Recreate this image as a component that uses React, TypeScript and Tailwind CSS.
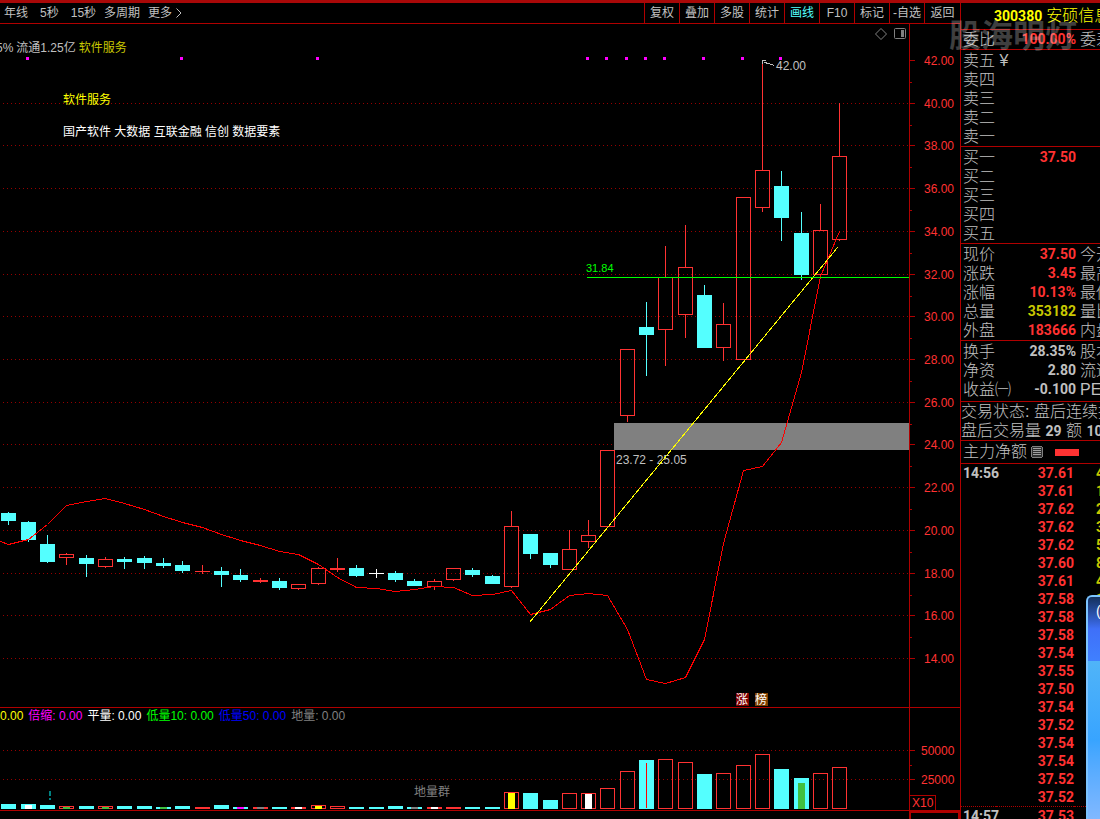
import React from 'react';

type Kind = 'up' | 'down' | 'flat';

interface Bar {
  x: number;
  kind: Kind;
  top: number;
  bottom: number;
  high: number;
  low: number;
  vol: number;
  mark?: string;
}

const UP = '#ff3232';
const DOWN = '#54ffff';
const AXIS = '#b00000';

// x, kind, body top, body bottom, high, low, volume top, volume marker
const RAW: [number, Kind, number, number, number, number, number, string?][] = [
  [8, 'down', 513, 521, 512, 525, 804],
  [28, 'down', 522, 540, 521, 542, 804, '#ffffff'],
  [47, 'down', 544, 562, 535, 563, 805],
  [66, 'up', 554, 558, 553, 565, 806, '#40c040'],
  [86, 'down', 558, 564, 555, 577, 806],
  [105, 'up', 559, 567, 557, 568, 806, '#40c040'],
  [124, 'down', 559, 562, 557, 569, 806],
  [144, 'down', 558, 563, 556, 569, 806],
  [163, 'down', 563, 566, 558, 568, 807, '#40c040'],
  [182, 'down', 565, 571, 561, 573, 806],
  [202, 'up', 571, 572, 565, 574, 807],
  [221, 'down', 571, 575, 567, 587, 805],
  [240, 'down', 575, 580, 569, 582, 807, '#ff00ff'],
  [260, 'up', 580, 582, 578, 583, 807, '#808080'],
  [279, 'down', 581, 588, 578, 590, 807],
  [298, 'up', 584, 589, 584, 590, 807, '#ffffff'],
  [318, 'up', 568, 584, 567, 585, 805, '#ffff00'],
  [337, 'up', 568, 570, 558, 572, 806],
  [356, 'down', 568, 576, 565, 577, 807],
  [376, 'flat', 573, 574, 569, 578, 807],
  [395, 'down', 573, 580, 571, 582, 806],
  [414, 'down', 581, 586, 579, 586, 807, '#808080'],
  [434, 'up', 581, 587, 579, 590, 807, '#ffffff'],
  [453, 'up', 568, 580, 568, 581, 807],
  [472, 'down', 570, 575, 568, 577, 807],
  [492, 'down', 576, 584, 575, 584, 807],
  [511, 'up', 526, 587, 511, 588, 792, '#ffff00'],
  [530, 'down', 534, 554, 534, 559, 793],
  [550, 'down', 553, 565, 553, 568, 800],
  [569, 'up', 549, 570, 530, 570, 793],
  [588, 'up', 535, 542, 520, 548, 793, '#ffffff'],
  [607, 'up', 450, 527, 450, 527, 788],
  [627, 'up', 349, 416, 349, 422, 771],
  [646, 'down', 327, 335, 302, 376, 760],
  [665, 'up', 277, 330, 246, 366, 759],
  [685, 'up', 267, 315, 225, 338, 762],
  [704, 'down', 295, 348, 285, 348, 774],
  [723, 'up', 324, 348, 303, 361, 773],
  [743, 'up', 197, 360, 197, 360, 765],
  [762, 'up', 170, 208, 61, 212, 754],
  [781, 'down', 186, 218, 171, 241, 769],
  [801, 'down', 233, 275, 212, 280, 778, '#40c040'],
  [820, 'up', 230, 275, 204, 275, 773],
  [839, 'up', 156, 240, 103, 241, 767],
];

const BARS: Bar[] = RAW.map(([x, kind, top, bottom, high, low, vol, mark]) => ({
  x, kind, top, bottom, high, low, vol, mark,
}));

const MA = [
  541, 544, 539, 524, 505, 501, 498, 503, 509, 516, 522, 527, 534, 540, 545, 551, 554, 564, 577, 587, 588, 591,
  589, 586, 587, 595, 594, 590, 614, 609, 595, 593, 595, 629, 679, 683, 677, 639, 543, 470, 466, 442, 372, 276, 231,
];
const MA_POINTS = [0, ...BARS.map((b) => b.x)].map((x, i) => `${x},${MA[i]}`).join(' ');

const EVENT_BARS = [1, 9, 16, 30, 31, 32, 33, 34, 36, 38, 40];

const PRICE_TICKS = [60, 103, 145, 188, 231, 274, 316, 359, 402, 444, 487, 530, 573, 615, 658];
const VOLUME_TICKS = [750, 779];

const PERIODS = [
  { label: '年线', gap: 'mr-3' },
  { label: '5秒', gap: 'mr-3' },
  { label: '15秒', gap: 'mr-2' },
  { label: '多周期', gap: 'mr-2' },
];
const TOOLS = ['复权', '叠加', '多股', '统计', '画线', 'F10', '标记', '-自选', '返回'];

const INDICATORS = [
  { text: '0.00', color: 'text-[#ffff00]' },
  { text: '倍缩: 0.00', color: 'text-[#ff00ff]' },
  { text: '平量: 0.00', color: 'text-white' },
  { text: '低量10: 0.00', color: 'text-[#00ff00]' },
  { text: '低量50: 0.00', color: 'text-[#0000ff]' },
  { text: '地量: 0.00', color: 'text-[#808080]' },
];

interface QuoteRow {
  label: string;
  value?: string;
  color?: string;
  next?: string;
}

const RED = 'text-[#ff3232]';
const YELLOW = 'text-[#c8c800]';
const GRAY = 'text-[#c0c0c0]';

const RATIO: QuoteRow[] = [{ label: '委比', value: '100.00%', color: RED, next: '委差' }];
const ASKS: QuoteRow[] = [{ label: '卖五 ¥' }, { label: '卖四' }, { label: '卖三' }, { label: '卖二' }, { label: '卖一' }];
const BIDS: QuoteRow[] = [
  { label: '买一', value: '37.50', color: RED },
  { label: '买二' },
  { label: '买三' },
  { label: '买四' },
  { label: '买五' },
];
const PRICES: QuoteRow[] = [
  { label: '现价', value: '37.50', color: RED, next: '今开' },
  { label: '涨跌', value: '3.45', color: RED, next: '最高' },
  { label: '涨幅', value: '10.13%', color: RED, next: '最低' },
  { label: '总量', value: '353182', color: YELLOW, next: '量比' },
  { label: '外盘', value: '183666', color: RED, next: '内盘' },
];
const FUNDAMENTALS: QuoteRow[] = [
  { label: '换手', value: '28.35%', color: GRAY, next: '股本' },
  { label: '净资', value: '2.80', color: GRAY, next: '流通' },
  { label: '收益㈠', value: '-0.100', color: GRAY, next: 'PE(动)' },
];

const TRADES: [string, string, string][] = [
  ['14:56', '37.61', '4'],
  ['', '37.61', '1'],
  ['', '37.62', '2'],
  ['', '37.62', '3'],
  ['', '37.62', '5'],
  ['', '37.60', '8'],
  ['', '37.61', '4'],
  ['', '37.58', '1'],
  ['', '37.58', ''],
  ['', '37.58', ''],
  ['', '37.54', ''],
  ['', '37.55', ''],
  ['', '37.50', ''],
  ['', '37.54', ''],
  ['', '37.52', ''],
  ['', '37.54', ''],
  ['', '37.54', ''],
  ['', '37.52', ''],
  ['', '37.52', ''],
  ['14:57', '37.53', ''],
];

const NUM = "font-['Roboto','Liberation_Sans',sans-serif] text-sm font-bold";

const GridLines: React.FC<{ ys: number[] }> = ({ ys }) => (
  <>
    {ys.map((y) => (
      <line key={y} x1="3" x2="100%" y1={y + 0.5} y2={y + 0.5} stroke="#960000" strokeDasharray="1 3" />
    ))}
  </>
);

const Box: React.FC<{ x: number; top: number; bottom: number; kind: Kind }> = ({ x, top, bottom, kind }) => {
  const h = bottom - top;
  if (kind === 'flat') return <rect x={x - 7} y={top} width="15" height={h} fill="#ffffff" />;
  if (kind === 'down') return <rect x={x - 7} y={top} width="15" height={h} fill={DOWN} />;
  if (h < 3) return <rect x={x - 7} y={top} width="15" height={h} fill={UP} />;
  return <rect x={x - 6.5} y={top + 0.5} width="14" height={h - 1} fill="none" stroke={UP} />;
};

const Candle: React.FC<{ bar: Bar }> = ({ bar }) => {
  const color = bar.kind === 'up' ? UP : bar.kind === 'down' ? DOWN : '#ffffff';
  return (
    <g>
      <rect x={bar.x} y={bar.high} width="1" height={bar.top - bar.high} fill={color} />
      <rect x={bar.x} y={bar.bottom} width="1" height={bar.low - bar.bottom} fill={color} />
      <Box x={bar.x} top={bar.top} bottom={bar.bottom} kind={bar.kind} />
    </g>
  );
};

const PriceChart: React.FC = () => (
  <svg className="col-start-1 row-start-1 block h-[683px] w-full text-xs" shapeRendering="crispEdges">
    <g transform="translate(0 -24)">
      <GridLines ys={PRICE_TICKS.slice(1)} />
      {BARS.map((bar) => (
        <Candle key={bar.x} bar={bar} />
      ))}
      {EVENT_BARS.map((i) => (
        <rect key={i} x={BARS[i].x - 2} y="57" width="3" height="3" fill="#ff00ff" />
      ))}

      {/* gap zone */}
      <rect x="614" y="423" width="100%" height="27" fill="#808080" />
      <text x="616" y="464" fill="#c0c0c0">23.72 - 25.05</text>

      <polyline points={MA_POINTS} fill="none" stroke="#ff0000" transform="translate(0.5 0.5)" />
      <line x1="529.5" y1="622.5" x2="837.5" y2="247.5" stroke="#ffff00" />
      <line x1="587" x2="100%" y1="277.5" y2="277.5" stroke="#00ff00" />
      <text x="586" y="272" fill="#00ff00" className="text-[11px]">31.84</text>

      {/* high marker */}
      <path d="M763 60.5h3M762.5 60v4M764 62.5l5 1 5 2" fill="none" stroke="#c0c0c0" />
      <text x="776" y="70" fill="#c0c0c0">42.00</text>

      <rect x="736" y="693" width="13" height="13" fill="#800000" />
      <text x="736" y="704" fill="#ffffff">涨</text>
      <rect x="755" y="693" width="13" height="13" fill="#804000" />
      <text x="755" y="704" fill="#ffffff">榜</text>
    </g>
  </svg>
);

const VolumeChart: React.FC = () => (
  <svg className="col-start-1 row-start-1 block h-[102px] w-full text-xs" shapeRendering="crispEdges">
    <g transform="translate(0 -708)">
      <GridLines ys={VOLUME_TICKS} />
      {BARS.map((bar) => (
        <g key={bar.x}>
          <Box x={bar.x} top={bar.vol} bottom={809} kind={bar.kind === 'flat' ? 'down' : bar.kind} />
          {bar.mark && (
            <rect
              x={bar.x - 3}
              y={bar.x === 801 ? 783 : Math.min(bar.vol + 1, 807)}
              width="7"
              height={bar.x === 801 ? 26 : 809 - Math.min(bar.vol + 1, 807)}
              fill={bar.mark}
            />
          )}
        </g>
      ))}
      <rect x="646" y="763" width="1" height="45" fill="#ff0000" />
      <rect x="49" y="791" width="2" height="5" fill="#008080" />
      <rect x="49" y="798" width="2" height="2" fill="#008080" />
      <text x="414" y="796" fill="#808080">地量群</text>
    </g>
  </svg>
);

const PriceAxis: React.FC = () => (
  <svg className="block h-[683px] w-[51px] shrink-0 text-xs" shapeRendering="crispEdges">
    <rect width="1" height="100%" fill={AXIS} />
    <g transform="translate(0 -24)">
      {PRICE_TICKS.map((y, i) => (
        <g key={y}>
          <rect x="1" y={y} width="5" height="1" fill={AXIS} />
          {i < PRICE_TICKS.length - 1 && <rect x="1" y={y + 22} width="2" height="1" fill={AXIS} />}
          <text x="15" y={y + 5} fill={UP}>{(42 - i * 2).toFixed(2)}</text>
        </g>
      ))}
    </g>
  </svg>
);

const VolumeAxis: React.FC = () => (
  <svg className="block h-[102px] w-[51px] shrink-0 text-xs" shapeRendering="crispEdges">
    <rect width="1" height="100%" fill={AXIS} />
    <g transform="translate(0 -708)">
      <rect x="1" y="750" width="5" height="1" fill={AXIS} />
      <rect x="1" y="765" width="2" height="1" fill={AXIS} />
      <rect x="1" y="779" width="5" height="1" fill={AXIS} />
      <text x="12" y="755" fill={UP}>50000</text>
      <text x="12" y="784" fill={UP}>25000</text>
      <path d="M0 795.5h26.5V810" fill="none" stroke={AXIS} />
      <text x="3" y="807" fill={UP}>X10</text>
    </g>
  </svg>
);

const QuoteTable: React.FC<{ rows: QuoteRow[]; className?: string }> = ({ rows, className = '' }) => (
  <div className={`shrink-0 border-b border-[#b00000] ${className}`}>
    <table className="w-full table-fixed border-collapse whitespace-nowrap">
      <colgroup>
        <col className="w-[35px]" />
        <col className="w-[80px]" />
        <col />
      </colgroup>
      <tbody>
        {rows.map((row) => (
          <tr key={row.label} className="h-[19px] leading-[19px]">
            <th scope="row" className="p-0 pl-0.5 text-left font-light">{row.label}</th>
            <td className={`p-0 text-right ${NUM} leading-[19px] ${row.color ?? ''}`}>{row.value}</td>
            <td className="overflow-hidden p-0 pl-1 font-light">{row.next}</td>
          </tr>
        ))}
      </tbody>
    </table>
  </div>
);

const QuotePanel: React.FC = () => (
  <aside className="relative flex w-[140px] shrink-0 flex-col border-l border-[#b00000] text-base">
    <h1 className="flex h-[27px] shrink-0 items-center gap-1 whitespace-nowrap border-b border-[#b00000] pl-[33px] text-base font-light text-[#ffff00]">
      <span className={NUM}>300380</span>
      安硕信息
    </h1>
    <QuoteTable rows={RATIO} />
    <QuoteTable rows={ASKS} className="pt-px" />
    <QuoteTable rows={BIDS} className="pt-px" />
    <QuoteTable rows={PRICES} className="pt-px" />
    <QuoteTable rows={FUNDAMENTALS} className="pt-px pb-0.5" />
    <div className="shrink-0 overflow-hidden whitespace-nowrap border-b border-[#b00000] font-light leading-[19px]">
      <p className="h-[19px]">交易状态: 盘后连续报价</p>
      <p className="h-[19px]">
        盘后交易量 <span className={NUM}>29</span> 额 <span className={NUM}>10.9万</span>
      </p>
    </div>
    <div className="flex h-[23px] shrink-0 items-center border-b border-[#b00000] pl-0.5 font-light">
      主力净额
      <svg className="ml-1 h-3 w-3 shrink-0" viewBox="0 0 12 12" shapeRendering="crispEdges">
        <rect x="0.5" y="0.5" width="11" height="11" rx="2" fill="#303030" stroke="#808080" />
        <path d="M2 2.5h8M2 4.5h8M2 6.5h8M2 8.5h8" stroke="#a0a0a0" />
      </svg>
      <span className="ml-3 h-[7px] w-6 bg-[#ff3232]"></span>
    </div>
    <table className={`w-full table-fixed border-collapse whitespace-nowrap ${NUM}`}>
      <colgroup>
        <col className="w-[35px]" />
        <col className="w-[78px]" />
        <col />
      </colgroup>
      <tbody>
        {TRADES.map(([time, price, count], i) => (
          <tr
            key={i}
            className={`h-[18px] leading-[18px] ${i > 0 && time ? 'border-t border-dotted border-[#b00000]' : ''}`}
          >
            <td className="p-0 pl-0.5 text-[#c0c0c0]">{time}</td>
            <td className="p-0 text-right text-[#ff3232]">{price}</td>
            <td className="overflow-hidden p-0 pl-[22px] text-[#c8c800]">{count}</td>
          </tr>
        ))}
      </tbody>
    </table>
    <div className="pointer-events-none absolute -left-3 top-[13px] whitespace-nowrap text-[32px] font-bold leading-[40px] text-white/25">
      股海明灯
    </div>
  </aside>
);

const App: React.FC = () => {
  return (
    <div className="relative flex h-screen flex-col overflow-hidden bg-black font-['Liberation_Sans','Noto_Sans_CJK_SC',sans-serif] text-xs text-[#c0c0c0]">
      <div className="h-[3px] shrink-0 bg-[#a80808]"></div>
      <div className="flex min-h-0 flex-1">
        <main className="flex min-w-0 flex-1 flex-col">
          <nav className="flex h-[21px] shrink-0 border-b border-[#b00000]">
            <div className="flex flex-1 items-center pl-1">
              {PERIODS.map((p) => (
                <button key={p.label} type="button" className={p.gap}>{p.label}</button>
              ))}
              <button type="button" className="flex items-center gap-1">
                更多
                <svg className="h-2.5 w-1.5" viewBox="0 0 6 10" fill="none" stroke="currentColor">
                  <path d="M0.5 0.5L5 5L0.5 9.5" />
                </svg>
              </button>
            </div>
            {TOOLS.map((tool) => (
              <button
                key={tool}
                type="button"
                className={`w-[35px] whitespace-nowrap border-l border-[#b00000] last:w-9 ${tool === '画线' ? 'text-[#54ffff]' : ''}`}
              >
                {tool}
              </button>
            ))}
          </nav>

          <section className="flex shrink-0 border-b border-[#b00000]">
            <div className="grid min-w-0 flex-1">
              <PriceChart />
              <div className="col-start-1 row-start-1 flex flex-col whitespace-nowrap pt-4 leading-4">
                <p className="-ml-1 flex gap-[3px]">
                  <span>5%</span>
                  <span>流通1.25亿</span>
                  <span className="text-[#c8c800]">软件服务</span>
                </p>
                <p className="mt-9 pl-[63px] text-[#ffff00]">软件服务</p>
                <p className="mt-4 pl-[63px] text-white">国产软件 大数据 互联金融 信创 数据要素</p>
              </div>
              <div className="col-start-1 row-start-1 flex items-start gap-1.5 justify-self-end pr-0.5 pt-1">
                <svg className="h-3 w-3" viewBox="0 0 12 12" fill="none" stroke="#808080">
                  <path d="M6 0.5L11.5 6L6 11.5L0.5 6Z" />
                </svg>
                <svg className="h-3 w-3.5" viewBox="0 0 14 12" fill="none" stroke="#808080">
                  <rect x="1.5" y="0.5" width="11" height="10" rx="1" />
                  <rect x="8" y="2" width="3" height="7" fill="#808080" stroke="none" />
                </svg>
              </div>
            </div>
            <PriceAxis />
          </section>

          <section className="flex shrink-0 border-b border-[#b00000]">
            <div className="grid min-w-0 flex-1">
              <VolumeChart />
              <div className="col-start-1 row-start-1 flex gap-[5px] whitespace-nowrap leading-4">
                {INDICATORS.map((item) => (
                  <span key={item.text} className={item.color}>{item.text}</span>
                ))}
              </div>
            </div>
            <VolumeAxis />
          </section>

          <div className="flex flex-1 justify-end">
            <div className="w-[51px] border-2 border-b-0 border-[#b00000]"></div>
          </div>
        </main>
        <QuotePanel />
      </div>

      {/* floating window docked at the screen edge */}
      <div className="absolute bottom-0 right-0 flex h-56 w-3.5 flex-col overflow-hidden rounded-tl-md border-l-2 border-t-2 border-[#7cc4ff] bg-[#38a8ff]">
        <div className="h-16 shrink-0 whitespace-nowrap bg-linear-to-b from-[#14305c] via-[#3f70f8] to-[#4080ff] pl-2 pt-1 text-sm text-white">
          (
        </div>
        <div className="flex-1 bg-linear-to-b from-[#50b4f8] via-[#38a4ff] to-[#80b8ff]"></div>
      </div>
    </div>
  );
};

export default App;
